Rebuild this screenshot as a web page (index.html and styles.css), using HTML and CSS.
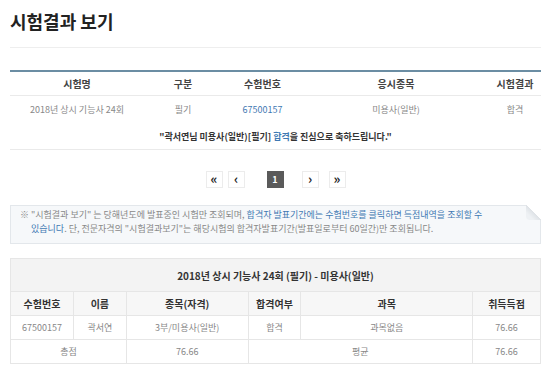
FILE: index.html
```html
<!DOCTYPE html>
<html>
<head>
    <title>시험결과 보기</title>
    <meta charset="utf-8">
    <link rel="stylesheet" href="styles.css">
</head>
<body>
    <div class="page">
        <div class="title-bar">
            <h1>시험결과 보기</h1>
        </div>

        <table class="result-list">
            <colgroup>
                <col class="w-name">
                <col class="w-type">
                <col class="w-no">
                <col class="w-item">
                <col class="w-result">
            </colgroup>
            <tr>
                <th>시험명</th>
                <th>구분</th>
                <th>수험번호</th>
                <th>응시종목</th>
                <th>시험결과</th>
            </tr>
            <tr class="data">
                <td>2018년 상시 기능사 24회</td>
                <td>필기</td>
                <td><a class="link">67500157</a></td>
                <td>미용사(일반)</td>
                <td>합격</td>
            </tr>
            <tr class="congrats">
                <td colspan="5">"곽서연님 미용사(일반)[필기] <span class="blue">합격</span>을 진심으로 축하드립니다."</td>
            </tr>
        </table>

        <div class="pager">
            <a class="btn">&laquo;</a>
            <a class="btn">&lsaquo;</a>
            <a class="btn num">1</a>
            <a class="btn">&rsaquo;</a>
            <a class="btn last">&raquo;</a>
        </div>

        <div class="notice">
            ※ "시험결과 보기" 는 당해년도에 발표중인 시험만 조회되며, <span class="blue">합격자 발표기간에는 수험번호를 클릭하면 득점내역을 조회할 수<br>있습니다</span>. 단, 전문자격의 "시험결과보기"는 해당시험의 합격자발표기간(발표일로부터 60일간)만 조회됩니다.
        </div>

        <table class="score">
            <colgroup>
                <col class="s1">
                <col class="s2">
                <col class="s3">
                <col class="s4">
                <col class="s5">
                <col class="s6">
            </colgroup>
            <tr>
                <th class="caption" colspan="6">2018년 상시 기능사 24회 (필기) - 미용사(일반)</th>
            </tr>
            <tr>
                <th>수험번호</th>
                <th>이름</th>
                <th>종목(자격)</th>
                <th>합격여부</th>
                <th>과목</th>
                <th>취득득점</th>
            </tr>
            <tr>
                <td>67500157</td>
                <td>곽서연</td>
                <td>3부/미용사(일반)</td>
                <td>합격</td>
                <td>과목없음</td>
                <td>76.66</td>
            </tr>
            <tr>
                <td colspan="2">총점</td>
                <td>76.66</td>
                <td colspan="2">평균</td>
                <td>76.66</td>
            </tr>
        </table>
    </div>
</body>
</html>
```

FILE: styles.css
```css
body {
    margin: 0;
    font-family: "Noto Sans CJK KR", "Noto Sans", sans-serif;
    color: #888;
    background-color: #fff;
}
.page {
    width: 531px;
    margin-left: 10px;
}
.title-bar {
    height: 47px;
    border-bottom: 1px solid #eeeeee;
}
h1 {
    margin: 0;
    padding-top: 8px;
    font-size: 18px;
    line-height: 26px;
    color: #222;
    font-weight: bold;
}
.blue, .link {
    color: #3f79b3;
}

/* top result list */
.result-list {
    width: 100%;
    margin-top: 22px;
    border-collapse: collapse;
    border-top: 2px solid #6b8da3;
    font-size: 9px;
    text-align: center;
}
.w-name { width: 134px; }
.w-type { width: 78px; }
.w-no { width: 81px; }
.w-item { width: 186px; }
.w-result { width: 52px; }
.result-list th {
    height: 23px;
    padding: 0;
    font-size: 10px;
    font-weight: bold;
    color: #444;
    border-bottom: 1px solid #eaeaea;
}
.result-list td {
    padding: 0;
}
.result-list .data td {
    height: 27px;
}
.result-list .congrats td {
    height: 26px;
    color: #333;
    font-weight: bold;
    border-bottom: 1px solid #eaeaea;
}

/* paging */
.pager {
    display: flex;
    justify-content: center;
    margin-top: 21px;
}
.btn {
    width: 15px;
    height: 15px;
    border: 1px solid #ececec;
    background-color: #fff;
    color: #222;
    font-size: 13px;
    font-weight: bold;
    line-height: 13px;
    text-align: center;
}
.btn + .btn {
    margin-left: 5px;
}
.pager .num {
    margin: 0 18px 0 22px;
    background-color: #5a5a5a;
    border-color: #5a5a5a;
    color: #fff;
    font-size: 9px;
    line-height: 15px;
}
.pager .num + .btn {
    margin-left: 0;
}
.pager .last {
    margin-left: 10px;
}

/* notice box */
.notice {
    position: relative;
    margin-top: 17px;
    padding: 2px 20px 7px 20px;
    text-indent: -11px;
    border: 1px solid #e3e7eb;
    background-color: #f6f8fa;
    font-size: 9px;
    line-height: 14px;
    color: #888;
}
.notice::after {
    content: "";
    position: absolute;
    top: -1px;
    right: -1px;
    width: 15px;
    height: 15px;
    background: linear-gradient(225deg, #fff 50%, #dfe3e7 50%, #eef1f4 75%);
    border-bottom-left-radius: 4px;
}

/* score table */
.score {
    width: 100%;
    margin-top: 14px;
    border-collapse: collapse;
    font-size: 9px;
    text-align: center;
}
.s1 { width: 63px; }
.s2 { width: 53px; }
.s3 { width: 122px; }
.s4 { width: 53px; }
.s5 { width: 172px; }
.s6 { width: 68px; }
.score th, .score td {
    padding: 0;
    border: 1px solid #e6e6e6;
}
.score th {
    height: 23px;
    background-color: #f7f7f7;
    font-size: 10px;
    font-weight: bold;
    color: #333;
}
.score th.caption {
    height: 32px;
    background-color: #f3f3f3;
}
.score td {
    height: 23px;
}
```
